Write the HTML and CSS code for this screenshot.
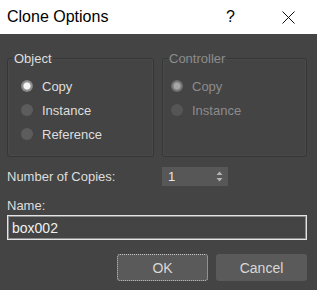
FILE: index.html
```html
<!DOCTYPE html>
<html lang="en">
<head>
    <meta charset="UTF-8">
    <meta name="viewport" content="width=device-width, initial-scale=1.0">
    <title>Clone Options</title>
    <link rel="stylesheet" href="styles.css">
</head>
<body>
    <div class="title-bar">
        <div class="title">Clone Options</div>
        <div class="help">?</div>
        <div class="close">
            <svg width="13" height="13" viewBox="0 0 13 13">
                <path d="M0.5 0.5 L12.5 12.5 M12.5 0.5 L0.5 12.5" stroke="#111" stroke-width="1" fill="none"/>
            </svg>
        </div>
    </div>

    <div class="content">
        <div class="groups">
            <fieldset class="group">
                <legend>Object</legend>
                <div class="radio checked"><span class="dot"></span>Copy</div>
                <div class="radio"><span class="dot"></span>Instance</div>
                <div class="radio"><span class="dot"></span>Reference</div>
            </fieldset>
            <fieldset class="group disabled">
                <legend>Controller</legend>
                <div class="radio checked"><span class="dot"></span>Copy</div>
                <div class="radio"><span class="dot"></span>Instance</div>
            </fieldset>
        </div>

        <div class="copies-row">
            <div class="label">Number of Copies:</div>
            <div class="spinner">
                <span>1</span>
                <svg width="7" height="11" viewBox="0 0 7 11">
                    <path d="M3.5 0.5 L6.5 4 L0.5 4 Z M0.5 7 L6.5 7 L3.5 10.5 Z" fill="#b4b4b4"/>
                </svg>
            </div>
        </div>

        <div class="name-label">Name:</div>
        <div class="name-input">box002</div>

        <div class="buttons">
            <div class="btn focused">OK</div>
            <div class="btn">Cancel</div>
        </div>
    </div>
</body>
</html>
```

FILE: styles.css
```css
body {
    margin: 0;
    width: 317px;
    height: 290px;
    background-color: #444444;
    font-family: "Liberation Sans", Arial, sans-serif;
    font-size: 13px;
    color: #dedede;
    overflow: hidden;
}

.title-bar {
    height: 34px;
    background-color: #ffffff;
    display: flex;
    align-items: center;
    color: #000;
}

.title {
    font-size: 16px;
    padding-left: 7px;
    flex: 1;
}

.help {
    font-size: 16px;
    width: 10px;
    margin-right: 46px;
}

.close {
    width: 13px;
    height: 13px;
    margin-right: 22px;
    display: flex;
}

.content {
    padding: 0 10px 0 7px;
}

.groups {
    display: flex;
    gap: 8px;
    margin-top: 17px;
}

.group {
    margin: 0;
    padding: 8px 0 0 0;
    border: 1px solid #363636;
    box-shadow: inset 0 0 0 1px #4a4a4a;
    border-radius: 3px;
    height: 106px;
    box-sizing: border-box;
}

.group:first-child {
    width: 147px;
}

.group:last-child {
    width: 145px;
}

.group legend {
    padding: 0 1px;
    margin-left: 5px;
    line-height: 15px;
}

.radio {
    display: flex;
    align-items: center;
    height: 24px;
    padding-left: 13px;
}

.dot {
    width: 12px;
    height: 12px;
    border-radius: 50%;
    background-color: #5c5c5c;
    margin-right: 9px;
    box-sizing: border-box;
}

.radio.checked .dot {
    background: radial-gradient(circle, #f4f4f4 0 3px, #9a9a9a 4px, #7a7a7a 6px);
}

.group.disabled {
    color: #8c8c8c;
}

.group.disabled .radio {
    padding-left: 8px;
}

.group.disabled .dot {
    background-color: #555555;
}

.group.disabled .radio.checked .dot {
    background: radial-gradient(circle, #a6a6a6 0 3px, #7c7c7c 4px, #666666 6px);
}

.copies-row {
    display: flex;
    align-items: center;
    margin-top: 10px;
}

.copies-row .label {
    width: 155px;
}

.spinner {
    width: 66px;
    height: 19px;
    background-color: #575757;
    display: flex;
    align-items: center;
    justify-content: space-between;
    padding: 0 5px 0 6px;
    box-sizing: border-box;
    color: #e6e6e6;
}

.name-label {
    margin-top: 12px;
    line-height: 16px;
}

.name-input {
    margin-top: 1px;
    height: 25px;
    width: 300px;
    box-sizing: border-box;
    border: 1px solid #e4e4e4;
    box-shadow: inset 0 0 0 1px #8c8c8c;
    padding: 0 4px;
    display: flex;
    align-items: center;
    color: #f0f0f0;
    font-size: 14px;
}

.buttons {
    display: flex;
    justify-content: flex-end;
    gap: 8px;
    margin-top: 14px;
}

.btn {
    width: 91px;
    height: 27px;
    background-color: #5a5a5a;
    border-radius: 3px;
    display: flex;
    align-items: center;
    justify-content: center;
    box-sizing: border-box;
    color: #d8d8d8;
    font-size: 14px;
}

.btn.focused {
    border: 1px dotted #c8c8c8;
}
```
